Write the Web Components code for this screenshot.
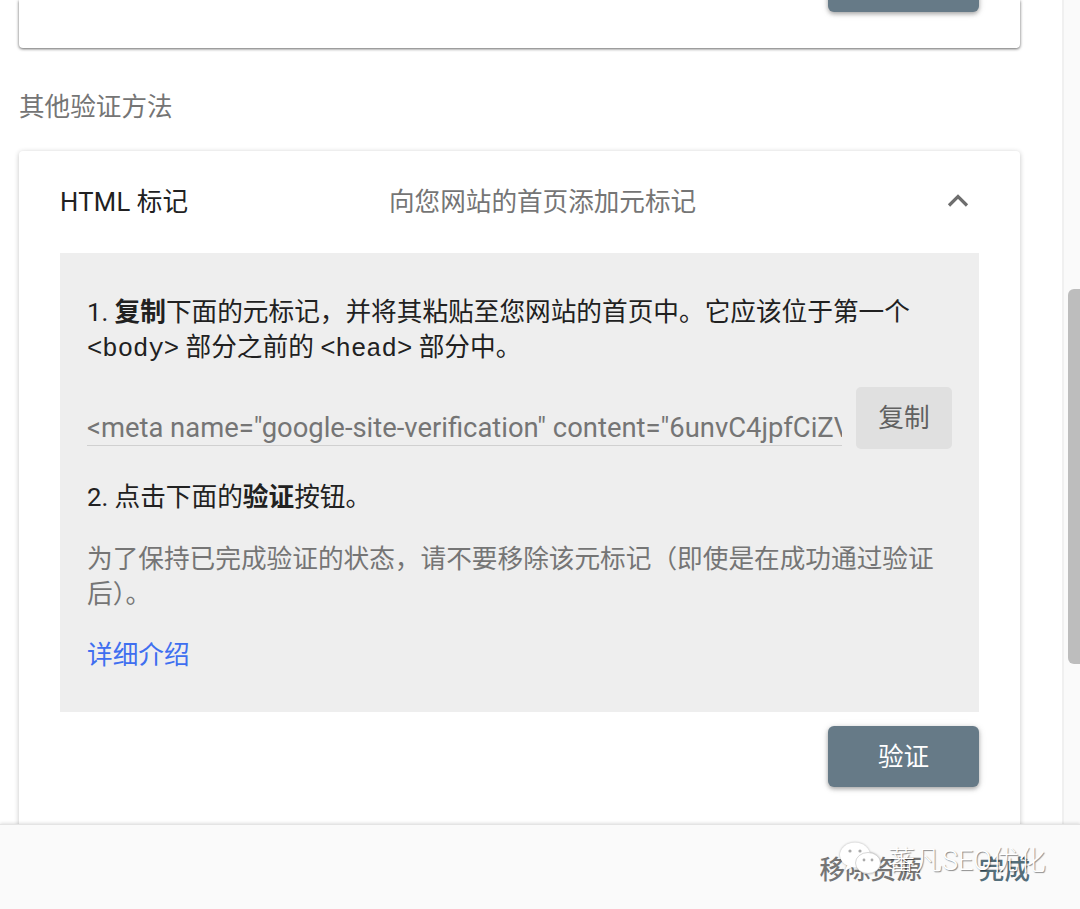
<!DOCTYPE html>
<html lang="zh"><head><meta charset="utf-8">
<style>
html,body{margin:0;height:100%;overflow:hidden;background:#fff;}
body{font-family:Roboto,"Noto Sans CJK SC",sans-serif;}
</style></head>
<body>
<app-shell>
  <top-card slot="main"></top-card>
  <section-title slot="main">其他验证方法</section-title>
  <method-card slot="main"></method-card>
  <page-footer slot="footer"></page-footer>
</app-shell>
<script>
const FONT='Roboto,"Noto Sans CJK SC",sans-serif';
function def(name,html){
  customElements.define(name,class extends HTMLElement{
    constructor(){super();this.attachShadow({mode:'open'}).innerHTML=html;}
  });
}
def('app-shell',`<style>
:host{display:flex;flex-direction:column;height:909px;overflow:hidden;position:relative}
.top{flex:1;min-height:0;display:flex;overflow:hidden}
.main{flex:none;width:1001px;padding:0 42px 0 19px;border-right:2px solid #f0f0f0}
.track{flex:1;background:#fafafa;padding:289px 0 0 4px;box-sizing:border-box;}
.thumb{height:375px;background:#bdbdbd;border-radius:6px 0 0 6px}
.foot{flex:none}
</style>
<div class="top"><div class="main"><slot name="main"></slot></div><div class="track"><div class="thumb"></div></div></div>
<div class="foot"><slot name="footer"></slot></div>`);
def('action-button',`<style>
:host{display:flex;align-items:center;justify-content:center;width:151px;height:61px;padding-bottom:5px;box-sizing:border-box;background:#667a87;color:#fff;border-radius:6px;font:400 25.6px ${FONT};box-shadow:0 2px 4px rgba(0,0,0,.3),0 1px 8px rgba(0,0,0,.1)}
</style><slot></slot>`);
def('top-card',`<style>
:host{display:flex;justify-content:flex-end;height:48px;background:#fff;border-radius:0 0 4px 4px;box-shadow:0 1px 3px rgba(0,0,0,.55),0 0 4px rgba(0,0,0,.12);padding-right:41px;box-sizing:border-box}
action-button{margin-top:-49px}
</style><action-button></action-button>`);
def('section-title',`<style>
:host{display:block;font:400 25.6px/32px ${FONT};color:#757575;padding:43px 0 28px}
</style><slot></slot>`);
def('method-card',`<style>
:host{display:block;background:#fff;border-radius:4px 4px 0 0;box-shadow:0 1px 5px rgba(0,0,0,.24);padding:0 41px;height:720px}
.head{display:flex;align-items:center;height:102px;font-size:25.6px;padding-bottom:5px;box-sizing:border-box}
.name{width:329px;color:#212121;}
.name span{letter-spacing:.3px}
.desc{flex:1;color:#757575;}
svg{display:block;margin-right:9px}
.panel{background:#eee;padding:42px 27px 0 27px;box-sizing:border-box;height:459px;font-size:25.67px;line-height:35px;color:#212121}
p{margin:0}
b{font-weight:700}
code{font-family:"Liberation Mono",monospace;font-size:25.6px}
.row{display:flex;align-items:flex-start;margin-top:20px;height:62px}
.field{width:755px;height:59px;border-bottom:1px solid #d0d0d0;color:#757575;white-space:nowrap;overflow:hidden;line-height:35px;padding-top:24px;box-sizing:border-box;font-size:27.4px}
.copy{margin-left:14px;flex:none;width:96px;height:62px;background:#e0e0e0;border-radius:5px;display:flex;align-items:center;justify-content:center;color:#616161;font-weight:400}
.s2{margin-top:31px}
.note{color:#757575;margin-top:27px}
.link{color:#3f6ff0;margin-top:26px}
.actions{display:flex;justify-content:flex-end;margin-top:14px}
</style>
<div class="head"><div class="name"><span>HTML</span> 标记</div><div class="desc">向您网站的首页添加元标记</div>
<svg width="24" height="24" viewBox="0 0 24 24"><path d="M3 17.5 12 8.5l9 9" fill="none" stroke="#6e6e6e" stroke-width="3.2"/></svg></div>
<div class="panel">
<p>1. <b>复制</b>下面的元标记，并将其粘贴至您网站的首页中。它应该位于第一个<br><code>&lt;body&gt;</code> 部分之前的 <code>&lt;head&gt;</code> 部分中。</p>
<div class="row"><div class="field" style="width:755px;margin-left:0">&lt;meta name="google-site-verification" content="6unvC4jpfCiZV</div><div class="copy">复制</div></div>
<p class="s2">2. 点击下面的<b>验证</b>按钮。</p>
<p class="note">为了保持已完成验证的状态，请不要移除该元标记（即使是在成功通过验证后）。</p>
<p class="link">详细介绍</p>
</div>
<div class="actions"><action-button>验证</action-button></div>`);
def('page-footer',`<style>
:host{display:flex;align-items:center;justify-content:flex-end;height:85px;box-sizing:border-box;background:#fafafa;border-top:1px solid #e4e4e4;box-shadow:0 -1px 3px rgba(0,0,0,.12);font:500 25.6px ${FONT};padding:0 50px 0 0;position:relative;gap:57px}
.a{color:#757575}.b{color:#546e7a}
.wm{position:absolute;left:838px;top:14px;display:flex;align-items:center;gap:4px;color:#fff;font-weight:300;font-size:27px;text-shadow:1px 1px 1px rgba(0,0,0,.45)}
svg{display:block;filter:drop-shadow(0 0 1px rgba(0,0,0,.3))}
</style>
<span class="a">移除资源</span><span class="b">完成</span>
<div class="wm"><svg width="46" height="34" viewBox="0 0 46 34"><ellipse cx="17" cy="13" rx="15" ry="12.5" fill="#fff"/><path d="M9 23l-2 6 7-4z" fill="#fff"/><ellipse cx="30" cy="21" rx="12.5" ry="10.5" fill="#fff" stroke="#bbb" stroke-width=".6"/><circle cx="12" cy="9" r="1.6" fill="#aaa"/><circle cx="22" cy="9" r="1.6" fill="#aaa"/><circle cx="26" cy="18" r="1.4" fill="#aaa"/><circle cx="34" cy="18" r="1.4" fill="#aaa"/></svg><span>蕃凡SEO优化</span></div>`);
</script>
</body></html>
